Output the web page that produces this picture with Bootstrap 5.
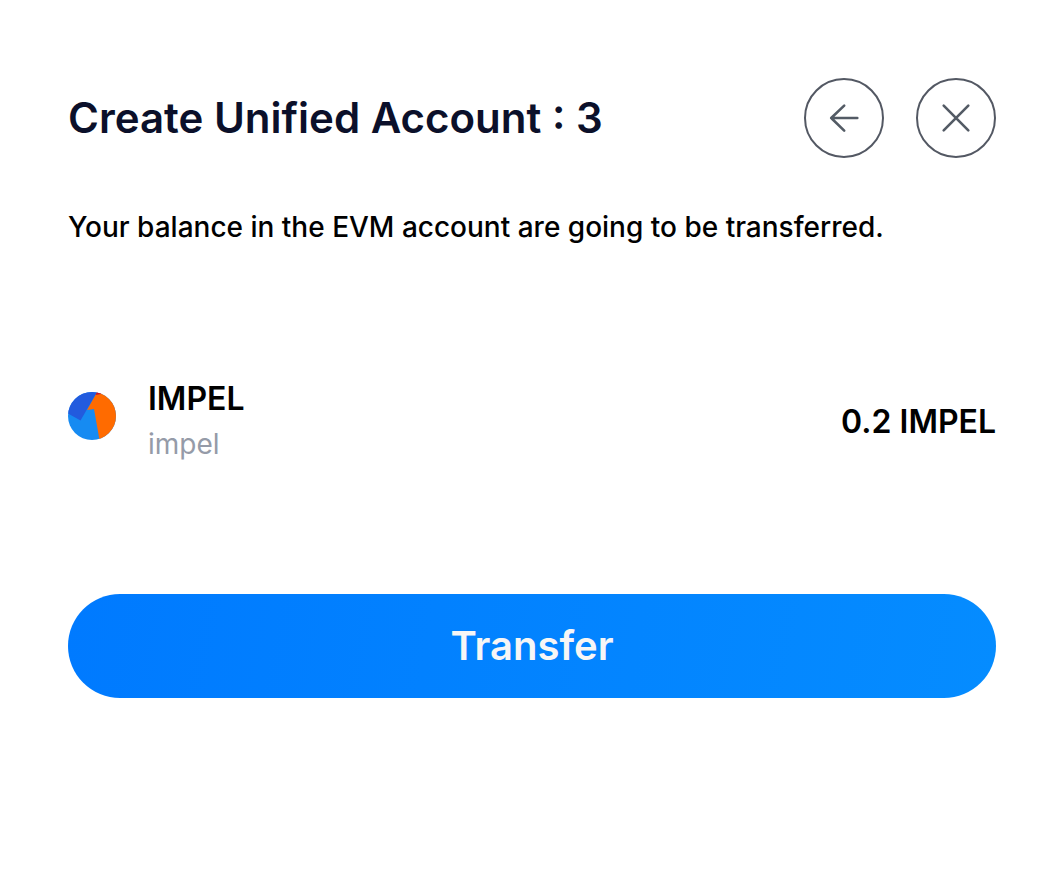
<!DOCTYPE html>
<html lang="en">
<head>
<meta charset="utf-8">
<meta name="viewport" content="width=device-width, initial-scale=1">
<title>Create Unified Account</title>
<link href="https://cdn.jsdelivr.net/npm/bootstrap@5.3.0/dist/css/bootstrap.min.css" rel="stylesheet">
<style>
body{font-family:Inter,"Liberation Sans",sans-serif;color:#000;background:#fff}
.dialog-pane{padding:78px 60px 60px 68px}
.dialog-title{font-size:42px;line-height:56px;font-weight:600;color:#0b102a}
.dialog-actions{gap:32px}
.round-btn{width:80px;height:80px;border:2px solid #535863;color:#535b65}
.notice{font-size:28px;line-height:36px;font-weight:550;margin-top:51px}
.token-row{margin-top:132px;gap:32px}
.token-logo{margin-bottom:12px}
.token-name,.token-amount{font-size:32px;line-height:44px;font-weight:600}
.token-id{font-size:28px;line-height:46px;color:#959ba8}
.transfer-btn,.transfer-btn:hover{height:104px;margin-top:127px;font-size:40px;font-weight:600;color:#f6f6f6;border:0;background:linear-gradient(100deg,#007aff,#058cff)}
</style>
</head>
<body>
<main class="dialog-pane">
<header class="d-flex align-items-center justify-content-between">
<h1 class="dialog-title m-0">Create Unified Account : 3</h1>
<div class="dialog-actions d-flex">
<button type="button" class="btn round-btn rounded-circle p-0 d-flex align-items-center justify-content-center" aria-label="Back"><svg width="32" height="32" viewBox="0 0 32 32" fill="none" stroke="currentColor" stroke-width="2.6" stroke-linecap="round" stroke-linejoin="round"><path d="M29.300 16H3.200M16.200 3.600 3.200 16l13 12.600"/></svg></button>
<button type="button" class="btn round-btn rounded-circle p-0 d-flex align-items-center justify-content-center" aria-label="Close"><svg width="32" height="32" viewBox="0 0 32 32" fill="none" stroke="currentColor" stroke-width="2.6" stroke-linecap="round"><path d="M3.700 3.700l24.600 24.600M28.300 3.700 3.700 28.300"/></svg></button>
</div>
</header>
<p class="notice mb-0">Your balance in the EVM account are going to be transferred.</p>
<section class="token-row d-flex align-items-center">
<svg class="token-logo flex-shrink-0" width="48" height="48" viewBox="0 0 48 48" aria-hidden="true">
<clipPath id="coin"><circle cx="24" cy="24" r="24"/></clipPath>
<g clip-path="url(#coin)">
<path fill="#168bf2" d="M0 0h48v48H0z"/>
<path fill="#ff6b00" d="M29 0 19 18l7-1 5.500 31H48V0z"/>
<path fill="#225bde" d="M0 21.500 12.500 28.500 29 0H0z"/>
<path fill="#c8102e" d="M29 0 27.500 3 33 2V0z"/>
</g>
</svg>
<div><div class="token-name">IMPEL</div><div class="token-id">impel</div></div>
<div class="token-amount ms-auto">0.2 IMPEL</div>
</section>
<button type="button" class="btn transfer-btn rounded-pill w-100">Transfer</button>
</main>
<script src="https://cdn.jsdelivr.net/npm/bootstrap@5.3.0/dist/js/bootstrap.bundle.min.js"></script>
</body>
</html>
